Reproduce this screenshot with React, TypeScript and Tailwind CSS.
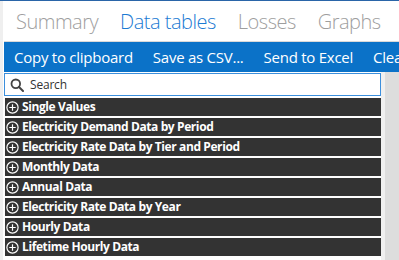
import React from "react";

const rows = [
  "Single Values",
  "Electricity Demand Data by Period",
  "Electricity Rate Data by Tier and Period",
  "Monthly Data",
  "Annual Data",
  "Electricity Rate Data by Year",
  "Hourly Data",
  "Lifetime Hourly Data",
];

function PlusCircle() {
  return (
    <svg width="13" height="13" viewBox="0 0 13 13" className="shrink-0">
      <circle cx="6.5" cy="6.5" r="5.6" fill="none" stroke="white" strokeWidth="1.2" />
      <path d="M6.5 3.3v6.4M3.3 6.5h6.4" stroke="white" strokeWidth="1.2" />
    </svg>
  );
}

export default function App() {
  return (
    <div
      className="w-[399px] h-[260px] overflow-hidden bg-white flex flex-col"
      style={{ fontFamily: '"Open Sans", "Noto Sans", sans-serif' }}
    >
      <div className="h-[1px] bg-[#2a65a8] shrink-0" />
      <div className="flex flex-1 min-h-0">
        <div className="w-[3px] bg-[#efefef] shrink-0" />
        <div className="w-[1px] bg-white shrink-0" />
        <div className="flex-1 min-w-0 flex flex-col">
          <div className="h-[41px] shrink-0 flex items-center gap-[22px] pl-[12px] pt-[1px] text-[20px] tracking-[-0.5px] font-light whitespace-nowrap border-b border-[#d9d9d9] overflow-hidden">
            <span className="text-[#9e9e9e]">Summary</span>
            <span className="text-[#1b7ad3]">Data tables</span>
            <span className="text-[#9e9e9e]">Losses</span>
            <span className="text-[#9e9e9e]">Graphs</span>
          </div>
          <div className="h-[30px] shrink-0 bg-[#0b72c8] flex items-center gap-[20px] pl-[10px] text-white text-[15px] tracking-[-0.25px] whitespace-nowrap overflow-hidden">
            <span>Copy to clipboard</span>
            <span>Save as CSV...</span>
            <span>Send to Excel</span>
            <span>Clear</span>
          </div>
          <div className="flex flex-1 min-h-0">
            <div className="w-[377px] shrink-0 flex flex-col">
              <div className="mt-[1px] h-[23px] border border-[#3c8fdc] bg-white flex items-center pl-[5px] gap-[6px]">
                <svg width="14" height="14" viewBox="0 0 14 14">
                  <circle cx="5.8" cy="5.8" r="4.3" fill="none" stroke="#444" strokeWidth="1.8" />
                  <path d="M9 9l4 4" stroke="#444" strokeWidth="2" strokeLinecap="round" />
                </svg>
                <span className="text-[12px] tracking-[-0.2px] text-[#333]">Search</span>
              </div>
              <div className="flex flex-col gap-[2px] mt-[2px] ml-[1px]">
                {rows.map((r) => (
                  <div
                    key={r}
                    className="h-[18px] bg-[#333333] flex items-center gap-[3px] pl-[1px] text-white text-[12px] tracking-[-0.4px] font-bold whitespace-nowrap"
                  >
                    <PlusCircle />
                    <span>{r}</span>
                  </div>
                ))}
              </div>
            </div>
            <div className="w-[4px] bg-[#f0f0f0] shrink-0" />
            <div className="flex-1 bg-[#dddddd]" />
          </div>
        </div>
      </div>
    </div>
  );
}
